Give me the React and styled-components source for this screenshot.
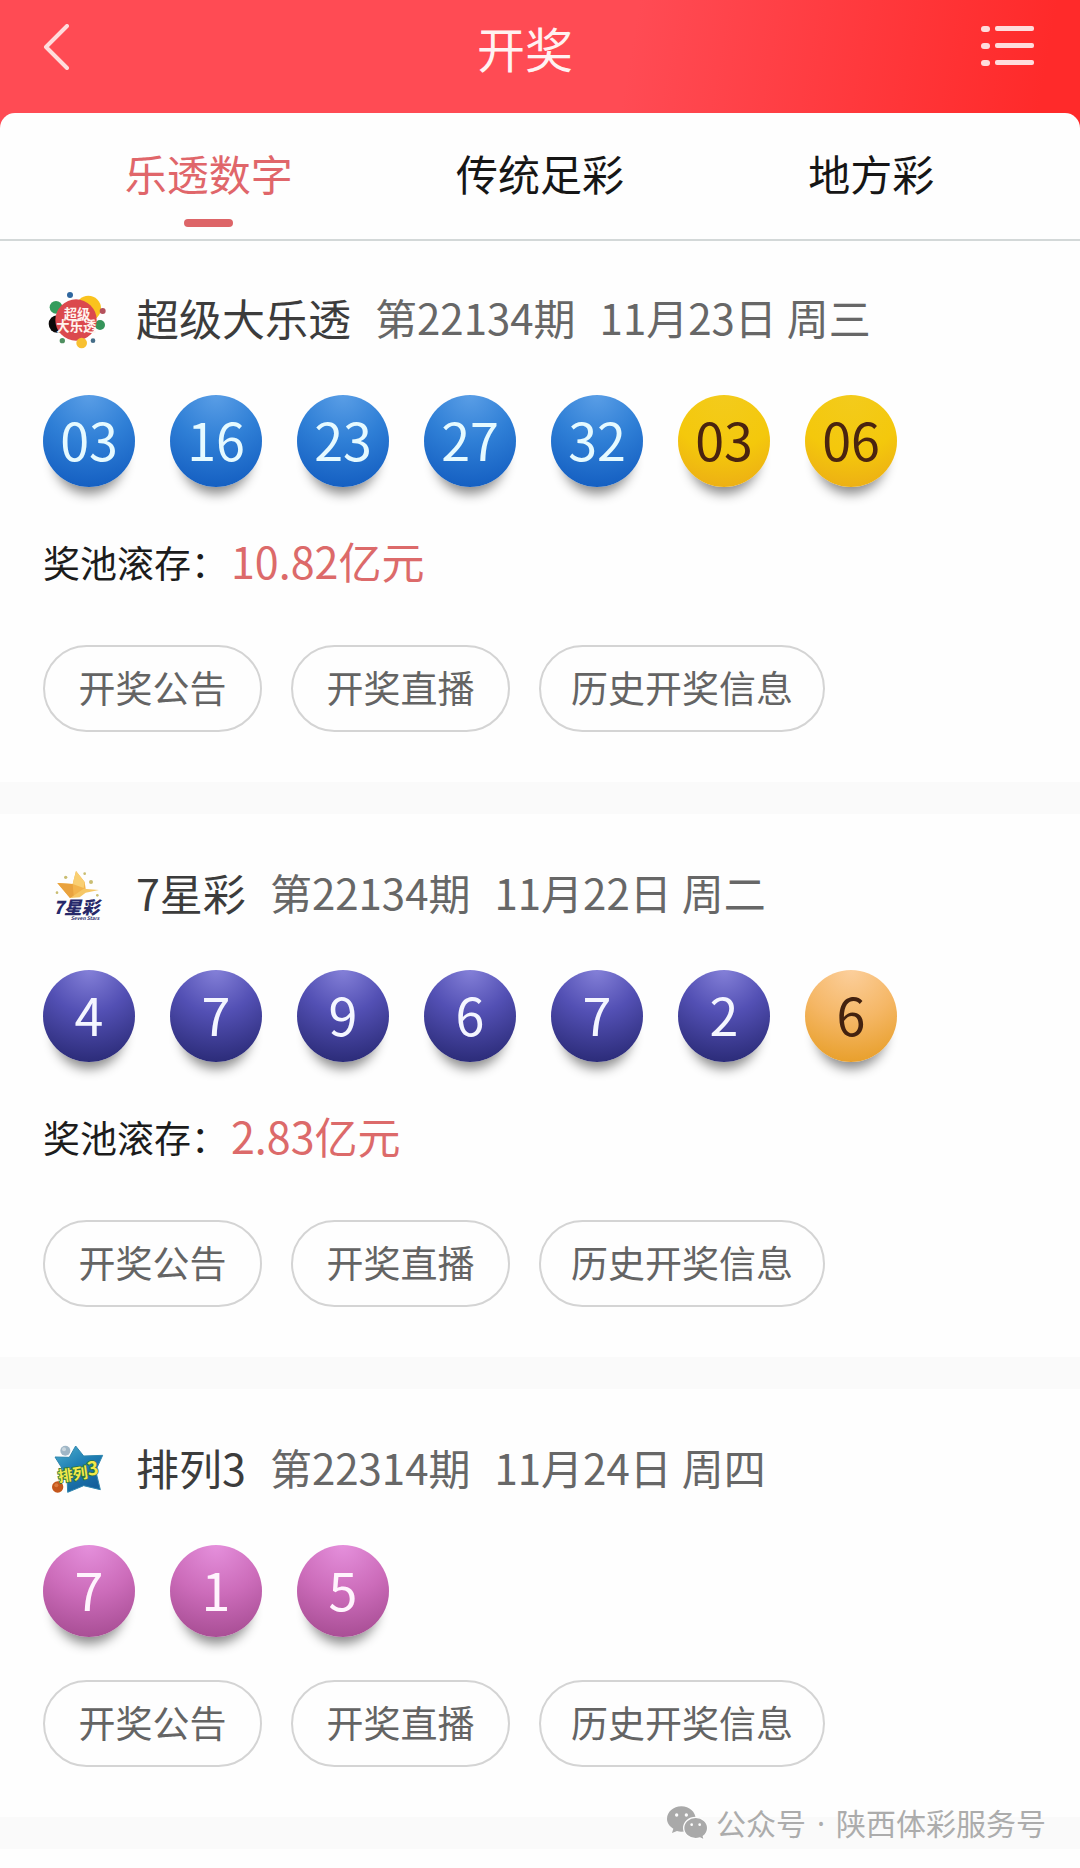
import { useState } from 'react'
import styled, { createGlobalStyle, css } from 'styled-components'

const GlobalStyle = createGlobalStyle`
  * {
    box-sizing: border-box;
  }

  body {
    margin: 0;
    background-color: #fefefe;
    font-family: "Noto Sans CJK SC", "Noto Sans", sans-serif;
  }

  button {
    font-family: inherit;
    border: none;
    background: none;
    padding: 0;
    cursor: pointer;
  }
`

const Page = styled.div`
  position: relative;
  min-height: 100vh;
`

const Header = styled.header`
  display: flex;
  align-items: center;
  justify-content: space-between;
  padding: 20px 46px 54px 43px;
  background: linear-gradient(100deg, #ff4b54 0%, #ff4b54 58%, #ff2a2a 96%);
`

const Title = styled.h1`
  margin: 0;
  font-size: 48px;
  line-height: 54px;
  font-weight: 400;
  color: #fff2f2;
`

const IconButton = styled.button`
  display: flex;
  color: #ffdcdc;
`

const Panel = styled.main`
  margin-top: -15px;
  border-radius: 15px 15px 0 0;
  background-color: #fefefe;
`

const Tabs = styled.nav`
  display: grid;
  grid-template-columns: repeat(3, 1fr);
  padding: 30px 43px 12px;
  box-shadow: 0 2px 0 #d3d8d8;
`

const Tab = styled.button`
  display: flex;
  flex-direction: column;
  align-items: center;
  gap: 16px;
  font-size: 42px;
  line-height: 60px;
  color: ${props => props.$active ? '#e0666a' : '#161616'};

  &::after {
    content: '';
    width: 49px;
    height: 8px;
    border-radius: 4px;
    background-color: ${props => props.$active ? '#dd6568' : 'transparent'};
  }
`

const Draw = styled.section`
  padding: 50px 43px;
  border-bottom: 32px solid #fafafa;
`

const DrawHeader = styled.div`
  display: flex;
  gap: 24px;
  margin-bottom: 46px;
  font-size: 42px;
  line-height: 56px;
  color: #676767;
  white-space: nowrap;

  svg {
    flex-shrink: 0;
    margin: 0 5px 0 4px;
  }
`

const DrawName = styled.h2`
  margin: 0;
  font-size: 43px;
  font-weight: 400;
  color: #3c3c3c;
`

const DrawDate = styled.time`
  display: flex;
  gap: 10px;
`

const Balls = styled.ol`
  display: flex;
  gap: 35px;
  margin: 0;
  padding: 0;
  list-style: none;
`

const ballColors = {
  blue: css`
    background: radial-gradient(circle at 50% 0%, #5a9ee6 0%, #2f7fd6 45%, #0f58bd 100%);
    color: #e6faff;
  `,
  yellow: css`
    background: radial-gradient(circle at 50% 0%, #f3cb1c 0%, #f4c80c 55%, #eba916 100%);
    color: #4a2410;
  `,
  indigo: css`
    background: radial-gradient(circle at 50% 0%, #8480d8 0%, #5350b4 42%, #23246c 100%);
    color: #f4f6ff;
  `,
  orange: css`
    background: radial-gradient(circle at 50% 0%, #fccf9c 0%, #f5b766 48%, #e59a1e 100%);
    color: #43220f;
  `,
  pink: css`
    background: radial-gradient(circle at 50% 0%, #e590dc 0%, #cc6cba 48%, #a0478c 100%);
    color: #fff4fd;
  `,
}

const Ball = styled.li`
  display: flex;
  align-items: center;
  justify-content: center;
  width: 92px;
  height: 92px;
  padding-bottom: 4px;
  border-radius: 50%;
  font-size: 52px;
  line-height: 60px;
  box-shadow: 0 18px 12px -11px rgba(0, 0, 0, 0.45);
  ${props => ballColors[props.$color]}
`

const Pool = styled.p`
  display: flex;
  gap: 3px;
  margin: 45px 0 0;
  padding-bottom: 10px;
  font-size: 37px;
  line-height: 60px;
  color: #1c1c1c;
`

const PoolAmount = styled.strong`
  font-size: 43px;
  line-height: 56px;
  font-weight: 400;
  color: #dc6a6a;
`

const Actions = styled.div`
  display: flex;
  gap: 29px;
  margin-top: 43px;
`

const Action = styled.button`
  min-width: 219px;
  height: 87px;
  padding: 0 30px 4px;
  border: 2px solid #d4d4d4;
  border-radius: 44px;
  font-size: 37px;
  line-height: 60px;
  color: #646464;
  white-space: nowrap;
`

const Account = styled.div`
  position: absolute;
  right: 34px;
  bottom: 24px;
  display: flex;
  align-items: center;
  gap: 8px;
  font-size: 30px;
  line-height: 40px;
  color: #acacac;
`

const Dot = styled.span`
  display: inline-block;
  width: 30px;
  font-family: "Noto Sans", sans-serif;
  text-align: center;
`

const BackIcon = () => (
  <svg width="26" height="46" viewBox="0 0 26 46" fill="none" stroke="currentColor" strokeWidth="4" strokeLinecap="round" strokeLinejoin="round">
    <path d="M24 2 3 23l21 21" />
  </svg>
)

const MenuIcon = () => (
  <svg width="53" height="42" viewBox="0 0 53 42" fill="currentColor">
    {[1, 18, 35].map(y => (
      <g key={y}>
        <rect x="0" y={y - 1} width="9" height="6" rx="3" />
        <rect x="14" y={y - 1} width="39" height="5" rx="2" />
      </g>
    ))}
  </svg>
)

const LottoLogo = () => (
  <svg width="60" height="60" viewBox="51 57 180 180">
    <circle cx="175" cy="115" r="38" fill="#fac31e" />
    <circle cx="78" cy="112" r="19" fill="#339c5c" />
    <circle cx="82" cy="162" r="26" fill="#0b0808" />
    <circle cx="210" cy="165" r="15" fill="#35945a" />
    <circle cx="138" cy="150" r="62" fill="#db494d" />
    <circle cx="155" cy="219" r="16" fill="#f8c030" />
    <circle cx="120" cy="75" r="9" fill="#30679f" />
    <circle cx="218" cy="123" r="9" fill="#b4515c" />
    <circle cx="97" cy="212" r="8" fill="#4f8f60" />
    <circle cx="189" cy="212" r="7" fill="#456d88" />
    <text fill="#fff4ee" fontWeight="700" textAnchor="middle">
      <tspan x="141" y="146" fontSize="40">超级</tspan>
      <tspan x="139" y="184" fontSize="40">大乐透</tspan>
    </text>
  </svg>
)

const SevenStarLogo = () => (
  <svg width="60" height="60" viewBox="51 45 180 180">
    <path d="M82 102l46 3 10-39 26 33 3 20-20 20-27 8z" fill="#f3b44c" />
    <path d="M82 102l46 3 3 36-11 6z" fill="#e9a23e" />
    <path d="M138 66l26 33-3 18-33-12z" fill="#f9cf72" />
    <path d="M121 147l40-28 46 4-40 8-18 14z" fill="#f6c765" />
    <g fill="#c9bd72">
      <circle cx="107" cy="85" r="5" />
      <circle cx="164" cy="74" r="4" />
      <circle cx="183" cy="99" r="6" />
      <circle cx="81" cy="131" r="4" />
      <circle cx="202" cy="139" r="4" />
    </g>
    <text fill="#27296a" fontStyle="italic">
      <tspan x="70" y="196" fontSize="53" fontWeight="900">7星彩</tspan>
      <tspan x="122" y="212" fontSize="15" fontWeight="700">Seven Stars</tspan>
    </text>
  </svg>
)

const Pick3Logo = () => (
  <svg width="60" height="60" viewBox="51 48 180 180">
    <defs>
      <linearGradient id="pick3-star" x1="0" y1="0" x2="0.6" y2="1">
        <stop offset="0" stopColor="#4fb0cf" />
        <stop offset="0.5" stopColor="#1f7fb4" />
        <stop offset="1" stopColor="#14609c" />
      </linearGradient>
    </defs>
    <path
      d="M137 69l24 30 57-2-21 46 14 57-50-12-48 20-2-48-36-58 43 1z"
      fill="url(#pick3-star)"
      stroke="#2f86ae"
      strokeWidth="3"
      strokeLinejoin="round"
    />
    <circle cx="106" cy="83" r="15" fill="#9fb6c6" />
    <circle cx="102" cy="79" r="6" fill="#c9d6de" />
    <circle cx="83" cy="192" r="17" fill="#c4571c" />
    <circle cx="79" cy="187" r="6" fill="#dc7a3c" />
    <text
      fill="#f3ea4a"
      stroke="#2f7440"
      strokeWidth="5"
      paintOrder="stroke"
      fontWeight="700"
      transform="rotate(-8 148 150)"
    >
      <tspan x="83" y="168" fontSize="45">排列</tspan>
      <tspan x="173" y="162" fontSize="56">3</tspan>
    </text>
  </svg>
)

const WechatIcon = () => (
  <svg width="41" height="34" viewBox="0 0 123 102">
    <g fill="#a9a9a9">
      <path d="M43 1c24 0 43 17 43 38S67 77 43 77c-5 0-9-1-13-2l-15 6 4-13C8 61 0 51 0 39 0 18 19 1 43 1z" />
      <path
        d="M86 34c20 0 36 14 36 32 0 10-5 19-13 25l3 11-13-6c-4 1-8 2-13 2-20 0-36-14-36-32s16-32 36-32z"
        stroke="#fdfdfd"
        strokeWidth="4"
      />
    </g>
    <g fill="#fdfdfd">
      <circle cx="29" cy="27" r="5" />
      <circle cx="58" cy="27" r="5" />
      <circle cx="74" cy="56" r="4" />
      <circle cx="98" cy="56" r="4" />
    </g>
  </svg>
)

const tabs = ['乐透数字', '传统足彩', '地方彩']

const actions = ['开奖公告', '开奖直播', '历史开奖信息']

const draws = [
  {
    name: '超级大乐透',
    Logo: LottoLogo,
    issue: '22134',
    date: '11月23日',
    weekday: '周三',
    balls: [
      ['03', 'blue'],
      ['16', 'blue'],
      ['23', 'blue'],
      ['27', 'blue'],
      ['32', 'blue'],
      ['03', 'yellow'],
      ['06', 'yellow'],
    ],
    pool: '10.82亿元',
  },
  {
    name: '7星彩',
    Logo: SevenStarLogo,
    issue: '22134',
    date: '11月22日',
    weekday: '周二',
    balls: [
      ['4', 'indigo'],
      ['7', 'indigo'],
      ['9', 'indigo'],
      ['6', 'indigo'],
      ['7', 'indigo'],
      ['2', 'indigo'],
      ['6', 'orange'],
    ],
    pool: '2.83亿元',
  },
  {
    name: '排列3',
    Logo: Pick3Logo,
    issue: '22314',
    date: '11月24日',
    weekday: '周四',
    balls: [
      ['7', 'pink'],
      ['1', 'pink'],
      ['5', 'pink'],
    ],
  },
]

const DrawCard = ({ draw }) => {
  const { name, Logo, issue, date, weekday, balls, pool } = draw

  return (
    <Draw>
      <DrawHeader>
        <Logo />
        <DrawName>{name}</DrawName>
        <span>第{issue}期</span>
        <DrawDate>
          <span>{date}</span>
          <span>{weekday}</span>
        </DrawDate>
      </DrawHeader>

      <Balls>
        {balls.map(([number, color], index) => (
          <Ball key={index} $color={color}>{number}</Ball>
        ))}
      </Balls>

      {pool && (
        <Pool>
          奖池滚存：
          <PoolAmount>{pool}</PoolAmount>
        </Pool>
      )}

      <Actions>
        {actions.map(label => (
          <Action key={label} type="button">{label}</Action>
        ))}
      </Actions>
    </Draw>
  )
}

const App = () => {
  const [activeTab, setActiveTab] = useState(tabs[0])

  return (
    <Page lang="zh-CN">
      <GlobalStyle />
      <Header>
        <IconButton type="button" aria-label="返回">
          <BackIcon />
        </IconButton>
        <Title>开奖</Title>
        <IconButton type="button" aria-label="菜单">
          <MenuIcon />
        </IconButton>
      </Header>

      <Panel>
        <Tabs>
          {tabs.map(tab => (
            <Tab
              key={tab}
              type="button"
              $active={tab === activeTab}
              onClick={() => setActiveTab(tab)}
            >
              {tab}
            </Tab>
          ))}
        </Tabs>

        {draws.map(draw => (
          <DrawCard key={draw.name} draw={draw} />
        ))}
      </Panel>

      <Account>
        <WechatIcon />
        <span>公众号<Dot>·</Dot>陕西体彩服务号</span>
      </Account>
    </Page>
  )
}

export default App
